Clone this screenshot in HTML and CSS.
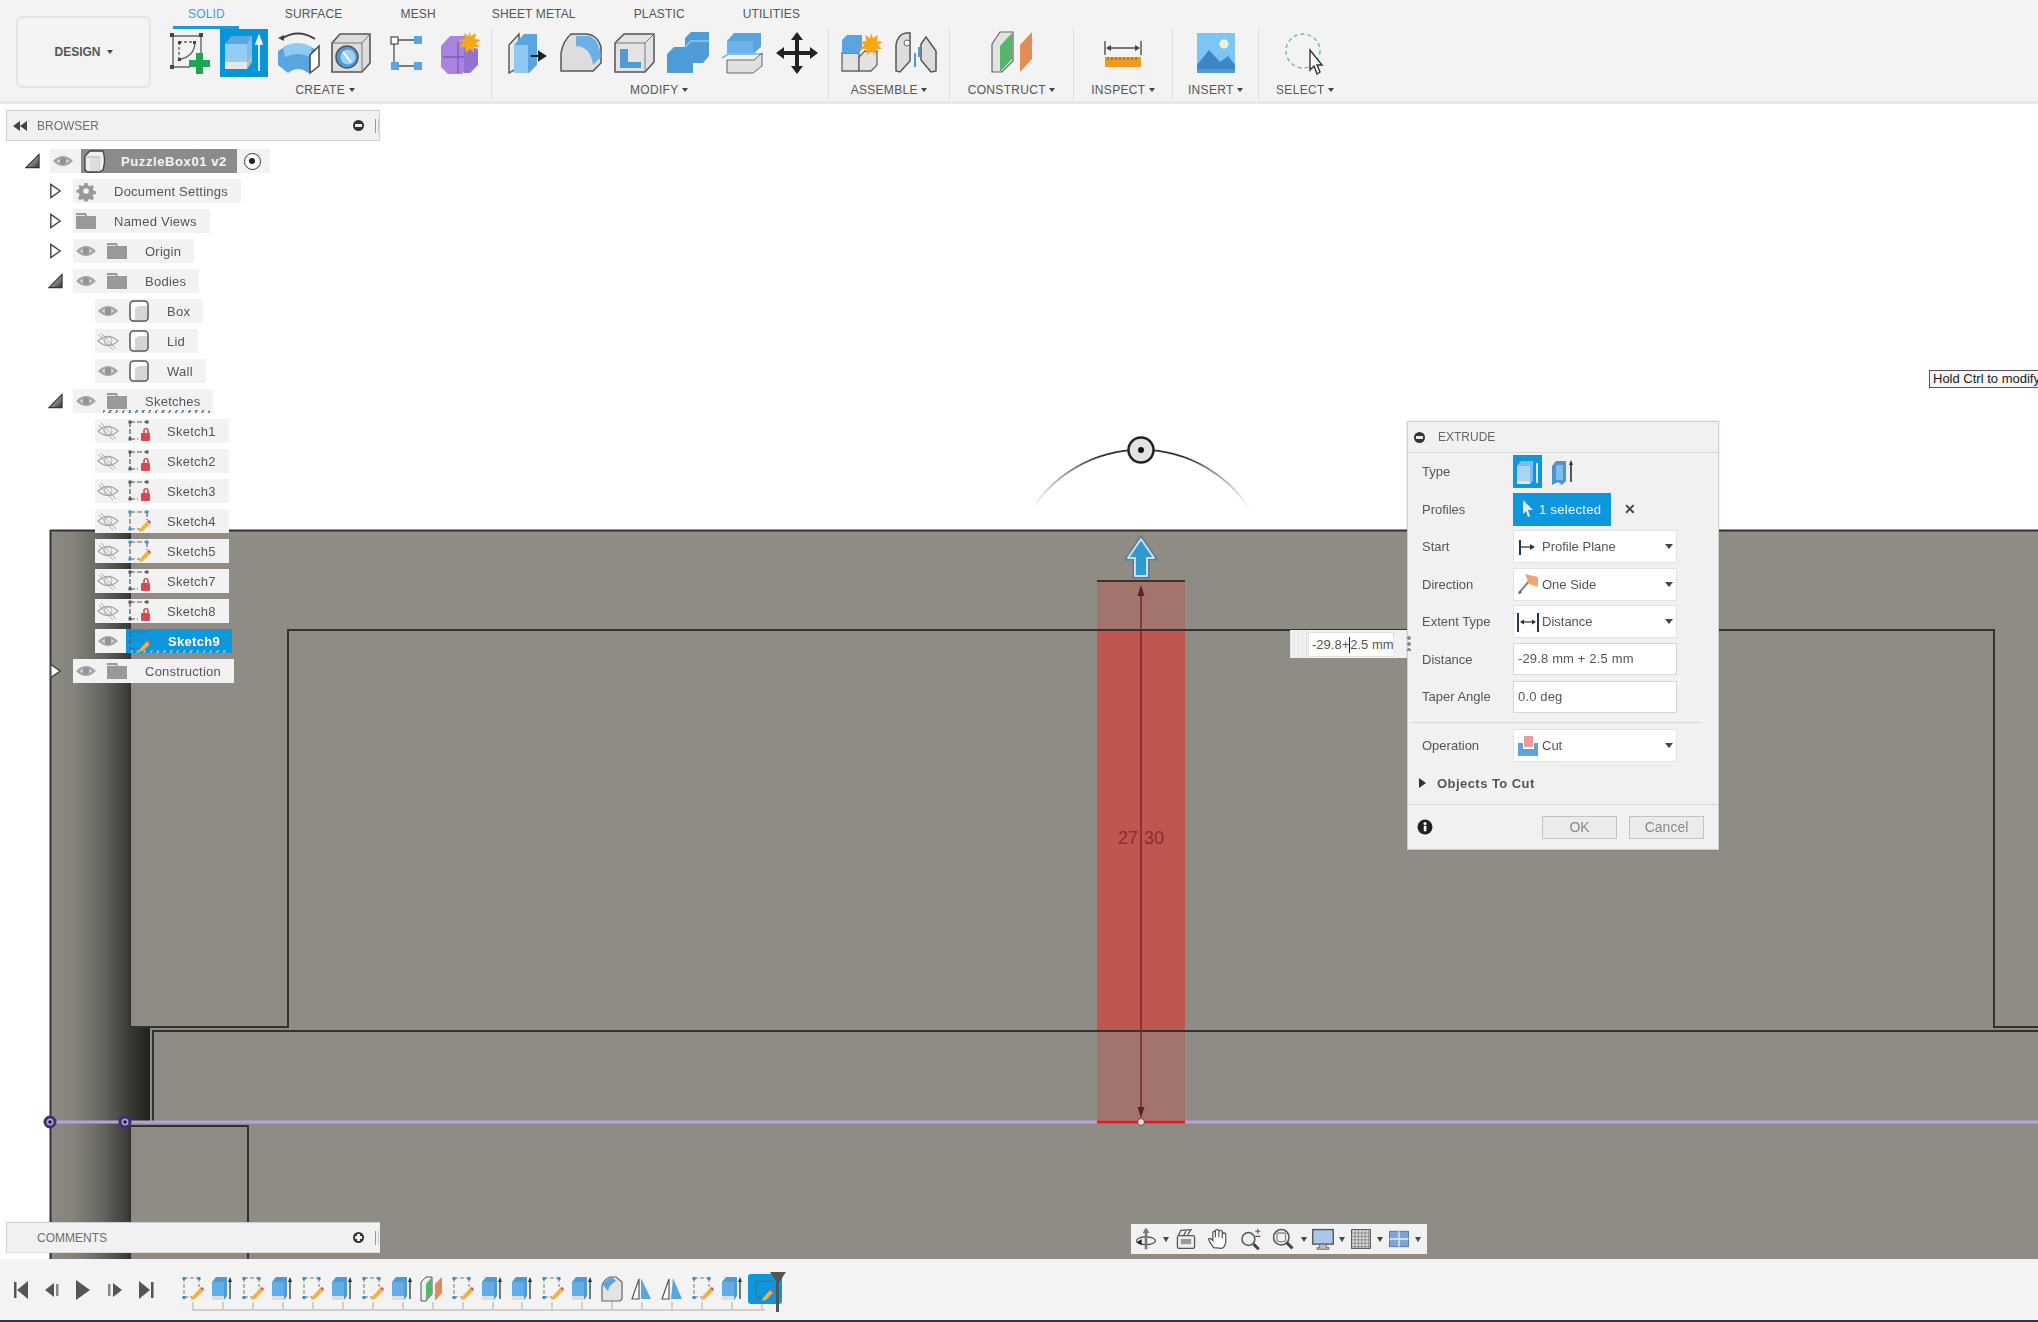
FILE: index.html
```html
<!DOCTYPE html>
<html lang="en">
<head>
<meta charset="utf-8">
<title>PuzzleBox01 v2 - Extrude</title>
<link rel="stylesheet" href="styles.css">
</head>
<body>
<svg class="defs" width="0" height="0" aria-hidden="true">
  <defs>
    <linearGradient id="darkSide" x1="0" x2="1" y1="0" y2="0">
      <stop offset="0" stop-color="#8c8a82"/><stop offset=".3" stop-color="#85837b"/><stop offset=".65" stop-color="#666560"/><stop offset="1" stop-color="#3a3a33"/>
    </linearGradient>
    <linearGradient id="darkStep" x1="0" x2="1" y1="0" y2="0">
      <stop offset="0" stop-color="#3a3a34"/><stop offset="1" stop-color="#1f1f1c"/>
    </linearGradient>
    <linearGradient id="arcFade" x1="0" x2="1" y1="0" y2="0">
      <stop offset="0" stop-color="#333" stop-opacity="0"/><stop offset=".3" stop-color="#333"/><stop offset=".7" stop-color="#333"/><stop offset="1" stop-color="#333" stop-opacity="0"/>
    </linearGradient>
    <linearGradient id="twistFill" x1="0" x2="1" y1="0" y2="1">
      <stop offset="0" stop-color="#eee"/><stop offset="1" stop-color="#333"/>
    </linearGradient>

    <symbol id="new-sketch" viewBox="0 0 48 48">
      <g fill="none" stroke="#666" stroke-width="1.4"><path d="M7 7H35M7 7V38M7 38H24M35 7V24"/><path d="M13 13V31M13 13H29" stroke-dasharray="3 2"/><path d="M15 30Q28 27 29 14"/></g>
      <g fill="#444"><rect x="4" y="4" width="4" height="4"/><rect x="33" y="4" width="4" height="4"/><rect x="4" y="36" width="4" height="4"/><rect x="12" y="12" width="3" height="3"/><rect x="12" y="29" width="3" height="3"/><rect x="27" y="12" width="3" height="3"/></g>
      <path d="M30 24h7v7h7v7h-7v7h-7v-7h-7v-7h7z" fill="#1fa650"/>
    </symbol>
    <symbol id="extrude-active" viewBox="0 0 48 48">
      <path d="M5 37V15L12 7H32V30L27 37Z" fill="#7dbdee"/><path d="M5 15L12 7H32L27 15Z" fill="#5fa6e0"/><path d="M5 15H27V33H5Z" fill="#94cef6"/><path d="M5 33H27V40H5Z" fill="#e6e6e6"/><path d="M27 33L32 26V33L27 40Z" fill="#bbb"/>
      <path d="M39 42V11M36 15L39 7L42 15Z" stroke="#fff" stroke-width="1.6" fill="#fff"/>
    </symbol>
    <symbol id="revolve" viewBox="0 0 48 48">
      <path d="M7 10Q24 -1 41 10" fill="none" stroke="#444" stroke-width="2"/><path d="M4 9l6-3v6z" fill="#444"/>
      <path d="M4 22Q24 8 44 22V36L34 44Q24 36 14 44L4 36Z" fill="#5aa5df"/><path d="M9 18Q24 10 38 18L36 28Q24 22 11 28Z" fill="#8fcaf2"/><path d="M36 26L45 17V37L36 44Z" fill="#fff" stroke="#444" stroke-width="1.5"/>
    </symbol>
    <symbol id="hole" viewBox="0 0 48 48">
      <path d="M4 14L12 5H42V34L34 43H4Z" fill="#ddd" stroke="#555" stroke-width="1.6"/><path d="M34 14H4M34 14L42 5M34 14V43" fill="none" stroke="#777"/><circle cx="19" cy="28" r="11" fill="#4e9bd6" stroke="#555" stroke-width="1.5"/><circle cx="20" cy="28" r="7.5" fill="#9ed0f2"/><path d="M15 23L23 33" stroke="#fff" stroke-width="2"/>
    </symbol>
    <symbol id="pattern" viewBox="0 0 48 48">
      <rect x="9" y="8" width="7" height="7" fill="#fff" stroke="#555" stroke-width="1.3"/><rect x="32" y="7" width="8" height="8" fill="#5aa5df"/><rect x="9" y="33" width="8" height="8" fill="#5aa5df"/><rect x="32" y="33" width="8" height="8" fill="#5aa5df"/>
      <path d="M16 11H32M12 15V33M17 37H32" stroke="#555" stroke-width="1.3"/>
    </symbol>
    <symbol id="form" viewBox="0 0 48 48">
      <path d="M5 17L14 7H32V38L26 45H12L5 38Z" fill="#a884e0"/><path d="M7 28H40M22 13V44" stroke="#7d59bd" stroke-width="1.3"/><path d="M32 17L42 20V36L34 44H28V18Z" fill="#9470d3"/>
      <path d="M33 2l2 5 5-3-1 6 6 1-5 3 4 4-6 0 0 6-4-4-4 4-1-6-6 0 4-4-4-3 6-1-1-6 5 3z" fill="#f5a81c"/>
    </symbol>
    <symbol id="press" viewBox="0 0 48 48">
      <path d="M6 16L16 5V38L6 44Z" fill="#e9e9e9" stroke="#555" stroke-width="1.4"/><path d="M11 16L21 5H34V36L26 44H11Z" fill="#5aa5df"/><path d="M11 16H25V44H11Z" fill="#8dc9f3"/>
      <path d="M28 27H40M36 23L42 27L36 31Z" stroke="#222" stroke-width="2" fill="#222"/>
    </symbol>
    <symbol id="fillet" viewBox="0 0 48 48">
      <path d="M4 24Q6 12 14 5H28Q40 5 44 18V34L36 42H4Z" fill="#ddd" stroke="#555" stroke-width="1.5"/><path d="M19 7H32Q42 10 44 28L36 36Q34 18 19 17Z" fill="#6bb0e6"/>
    </symbol>
    <symbol id="shell" viewBox="0 0 48 48">
      <path d="M4 14L13 5H43V33L34 43H4Z" fill="#e3e3e3" stroke="#555" stroke-width="1.5"/><path d="M34 14H4M34 14L43 5M34 14V43" fill="none" stroke="#777"/><path d="M9 20H17V33H30V39H9Z" fill="#4e9bd6"/>
    </symbol>
    <symbol id="combine" viewBox="0 0 48 48">
      <path d="M2 25L9 18H20V9L26 3H44V27L38 34H28V44H2Z" fill="#4e9bd6"/><path d="M20 18L26 12H44" fill="none" stroke="#7dbdee" stroke-width="2"/>
    </symbol>
    <symbol id="split" viewBox="0 0 48 48">
      <path d="M8 12L15 4H42V18L34 25H8Z" fill="#5aa5df"/><path d="M8 12H34V25H8Z" fill="#6bb3ea"/><path d="M3 29L10 25H44" fill="none" stroke="#82bfe9" stroke-width="2"/><path d="M8 31H35L43 24V37L34 44H8Z" fill="#e0e0e0" stroke="#666" stroke-width="1"/>
    </symbol>
    <symbol id="move" viewBox="0 0 48 48">
      <path d="M24 3L30 11H26V22H37V18L45 24L37 30V26H26V37H30L24 45L18 37H22V26H11V30L3 24L11 18V22H22V11H18Z" fill="#222"/>
    </symbol>
    <symbol id="new-comp" viewBox="0 0 48 48">
      <path d="M4 42V24H21V42Z" fill="#e2e2e2" stroke="#666" stroke-width="1.3"/><path d="M21 42V28L27 22H39V36L33 42Z" fill="#e2e2e2" stroke="#666" stroke-width="1.3"/><path d="M4 24V11L9 6H24V20L21 24Z" fill="#5aa5df"/>
      <path d="M33 4l2 5 5-3-1 6 6 1-5 3 4 4-6 0-1 6-4-4-4 4-1-6-6 0 4-4-4-3 6-1-1-6 5 3z" fill="#f5a81c"/>
    </symbol>
    <symbol id="joint" viewBox="0 0 48 48">
      <path d="M4 42V16Q6 5 14 4H18V32L8 43Z" fill="#ddd" stroke="#555" stroke-width="1.5"/><path d="M44 42V22L34 8L29 15V31L39 43Z" fill="#ddd" stroke="#555" stroke-width="1.5"/><path d="M23 24V38M27 18V28" stroke="#4e9bd6" stroke-width="2"/><circle cx="15" cy="14" r="3" fill="#fff" stroke="#666"/>
    </symbol>
    <symbol id="plane" viewBox="0 0 48 48">
      <path d="M4 15L12 3H25V32L14 43H4Z" fill="#e3e3e3" stroke="#666" stroke-width="1.2"/><path d="M12 43L12 17L24 4V30Z" fill="#55b56b"/><path d="M32 16L44 3V30L32 43Z" fill="#e28d55"/>
    </symbol>
    <symbol id="measure" viewBox="0 0 48 48">
      <path d="M6 12V26M42 12V26" stroke="#444" stroke-width="1.3"/><path d="M8 19H40" stroke="#444" stroke-width="1.4"/><path d="M7 19l5-3v6zM41 19l-5-3v6z" fill="#444"/>
      <rect x="6" y="28" width="36" height="10" fill="#ef9a22"/><path d="M9 28v3M13 28v3M17 28v3M21 28v3M25 28v3M29 28v3M33 28v3M37 28v3" stroke="#8c5510" stroke-width="1"/>
    </symbol>
    <symbol id="image" viewBox="0 0 48 48">
      <rect x="5" y="4" width="38" height="40" fill="#7cc6f5"/><circle cx="32" cy="15" r="4.5" fill="#f3f3d0"/><path d="M5 36L17 21L28 33L36 27L43 36V44H5Z" fill="#3d85c4"/><rect x="5" y="40" width="38" height="4" fill="#4e9bd6"/>
    </symbol>
    <symbol id="select" viewBox="0 0 48 48">
      <circle cx="22" cy="22" r="17" fill="none" stroke="#6cc08a" stroke-width="1.4" stroke-dasharray="4 3"/>
      <path d="M29 21V41L33 37L36 45L39 43L36 36H41Z" fill="#fff" stroke="#333" stroke-width="1.4"/>
    </symbol>

    <symbol id="eye" viewBox="0 0 26 24">
      <path d="M3 12Q13 2 23 12Q13 22 3 12Z" fill="#a5a5a5"/><path d="M7 12Q13 6.500 19 12Q13 17.500 7 12Z" fill="#e8e8e8"/><circle cx="13" cy="12" r="3.400" fill="#939393"/>
    </symbol>
    <symbol id="eye-off" viewBox="0 0 26 24">
      <path d="M3 12Q13 3 23 12Q13 21 3 12Z" fill="none" stroke="#aaa" stroke-width="1.300"/><circle cx="13" cy="12" r="4" fill="none" stroke="#bbb"/><path d="M6 4L21 20M4 6L18 21" stroke="#aaa" stroke-width="1"/>
    </symbol>
    <symbol id="folder" viewBox="0 0 26 24">
      <path d="M3 4H13L14 7H23V20H3Z" fill="#999"/><path d="M3 6H12V7H3Z" fill="#e5e5e5"/>
    </symbol>
    <symbol id="gear" viewBox="-3 -3 32 30">
      <path d="M11 2h4l.6 3 2.400 1 2.600-1.600 2.400 2.600-1.600 2.400 1 2.400 3 .6v3.200l-3 .6-1 2.400 1.600 2.600-2.400 2.400-2.600-1.600-2.400 1-.6 2.200h-4l-.6-2.200-2.400-1-2.600 1.600-2.400-2.400L5 17l-1-2.400-3-.6v-3.200l3-.6 1-2.400-1.600-2.400L5.800 4.400 8.400 6l2-1z" fill="#999"/><circle cx="13" cy="12" r="3.500" fill="#f2f2f2"/>
    </symbol>
    <symbol id="body" viewBox="0 0 26 24">
      <rect x="4" y="2" width="18" height="20" rx="3.500" fill="#fff" stroke="#555" stroke-width="1.500"/><path d="M9 9L13 7H21V20L18 21H9Z" fill="#d5d5d5"/>
    </symbol>
    <symbol id="root-body" viewBox="0 0 26 24">
      <path d="M3 7L8 2H21Q24 10 21 21L17 23H6Q3 22 3 20Z" fill="#efefef" stroke="#444" stroke-width="1.300"/><path d="M3 8H17V23" fill="none" stroke="#aaa"/><path d="M8 9H17V22H8Z" fill="#ddd"/>
    </symbol>
    <symbol id="sketch-lock" viewBox="0 0 26 24">
      <path d="M4 3H21M4 3V20M4 20H12" fill="none" stroke="#555" stroke-width="1.200" stroke-dasharray="5 2"/><g fill="#555"><rect x="2.500" y="1.500" width="3" height="3"/><rect x="19.500" y="1.500" width="3" height="3"/><rect x="2.500" y="18.500" width="3" height="3"/></g>
      <path d="M18 14V11Q20 8 22 11V14" fill="none" stroke="#d74852" stroke-width="1.600"/><rect x="15" y="14" width="9" height="8" rx="1" fill="#d74852"/>
    </symbol>
    <symbol id="sketch-edit" viewBox="0 0 26 24">
      <path d="M4 3H21M4 3V20M4 20H14M21 3V11" fill="none" stroke="#666" stroke-width="1.200" stroke-dasharray="5 2"/><g fill="#3a8fd0"><rect x="2.500" y="1.500" width="3" height="3"/><rect x="19.500" y="1.500" width="3" height="3"/><rect x="2.500" y="18.500" width="3" height="3"/></g>
      <path d="M14 20L21 12L24 15L17 22L13 23Z" fill="#f1b13c"/><path d="M21 12L24 15L25 13L23 11Z" fill="#e2504f"/>
    </symbol>
    <symbol id="sketch-sel" viewBox="0 0 26 24">
      <path d="M4 3H21M4 3V20M4 20H12" fill="none" stroke="#2a6f9a" stroke-width="1.200" stroke-dasharray="5 2"/>
      <path d="M14 20L21 12L24 15L17 22L13 23Z" fill="#f1b13c"/><path d="M21 12L24 15L25 13L23 11Z" fill="#e2504f"/>
    </symbol>
    <symbol id="tw-open" viewBox="0 0 16 16"><path d="M1 15L15 1V15Z" fill="url(#twistFill)" stroke="#333" stroke-width="1.200"/></symbol>
    <symbol id="tw-closed" viewBox="0 0 16 16"><path d="M3 1L13 8L3 15Z" fill="#fff" stroke="#444" stroke-width="1.500"/></symbol>

    <symbol id="d-solid" viewBox="0 0 28 32">
      <path d="M3 10L7 5H19V25L16 28H3Z" fill="#7dbdee"/><path d="M3 10H16V25H3Z" fill="#a5d5f7"/><path d="M3 25H16V28H3Z" fill="#e5e5e5"/><path d="M23 7V27" stroke="#fff" stroke-width="1.600"/>
    </symbol>
    <symbol id="d-thin" viewBox="0 0 28 32">
      <path d="M4 10L8 5H18V25L14 29L10 26L4 29Z" fill="#4e93cf"/><path d="M8 9H15V24H8Z" fill="#7dbdee"/><path d="M23 6V26" stroke="#333" stroke-width="1.600"/><path d="M21 9L23 4L25 9Z" fill="#333"/>
    </symbol>
    <symbol id="d-cursor" viewBox="0 0 16 20"><path d="M3 1V15L6 12L8 18L10 17L8 11H13Z" fill="#e8e8e8"/></symbol>
    <symbol id="d-start" viewBox="0 0 24 24"><path d="M4 5V20" stroke="#1d3a5c" stroke-width="2"/><path d="M5 12H15" stroke="#333" stroke-width="1.300"/><path d="M19 12L14 9V15Z" fill="#333"/></symbol>
    <symbol id="d-oneside" viewBox="0 0 24 24"><path d="M3 21L14 8" stroke="#888" stroke-width="2"/><path d="M9 2L22 5V15L13 12Z" fill="#efa56f"/><path d="M2 22l4-1-2-3z" fill="#3a6fa5"/></symbol>
    <symbol id="d-dist" viewBox="0 0 24 24"><path d="M2 3V22M22 3V22" stroke="#1d3a5c" stroke-width="2"/><path d="M5 12H19" stroke="#333" stroke-width="1.200"/><path d="M4 12L8 9.500V14.500ZM20 12L16 9.500V14.500Z" fill="#333"/></symbol>
    <symbol id="d-cut" viewBox="0 0 24 24"><path d="M8 2H17V13H8Z" fill="#ea9c9c"/><path d="M2 9H7V15H18V9H22V22H2Z" fill="#5aa5df"/></symbol>
    <symbol id="info" viewBox="0 0 16 16"><circle cx="8" cy="8" r="7.500" fill="#222"/><rect x="6.800" y="6.800" width="2.600" height="5.500" fill="#fff"/><circle cx="8" cy="4.500" r="1.500" fill="#fff"/></symbol>

    <symbol id="n-orbit" viewBox="0 0 28 28"><ellipse cx="14" cy="16" rx="11" ry="4.500" fill="none" stroke="#444" stroke-width="1.400"/><path d="M14 2V26" stroke="#777" stroke-width="3"/><path d="M14 1L10 7H18Z" fill="#777"/><path d="M3 18l6-4v7z" fill="#222"/></symbol>
    <symbol id="n-look" viewBox="0 0 28 28"><rect x="4" y="10" width="20" height="15" rx="2" fill="#eee" stroke="#555" stroke-width="1.500"/><rect x="8" y="14" width="12" height="6" fill="#999"/><path d="M5 10L8 4L21 3M11 10l3-5M16 9l3-5" fill="none" stroke="#555" stroke-width="1.500"/></symbol>
    <symbol id="n-pan" viewBox="0 0 28 28"><path d="M9 24Q3 16 3 14Q5 12 8 16V6Q10 4 11 6V12V4Q13 2 15 4V12V5Q17 3 19 5V13V8Q21 6 23 8V18Q22 24 18 25Z" fill="#fff" stroke="#555" stroke-width="1.400"/></symbol>
    <symbol id="n-zoom" viewBox="0 0 28 28"><circle cx="11" cy="14" r="7.500" fill="#e6f1f3" stroke="#555" stroke-width="1.800"/><path d="M17 20L23 26" stroke="#444" stroke-width="3.500"/><path d="M22 2V8M19 5H25M19 11H25" stroke="#555" stroke-width="1.300"/></symbol>
    <symbol id="n-fit" viewBox="0 0 28 28"><circle cx="12" cy="12" r="9" fill="#eef4f5" stroke="#555" stroke-width="1.800"/><rect x="7" y="7" width="10" height="10" rx="2" fill="none" stroke="#888" stroke-width="1.500"/><path d="M18 18L25 25" stroke="#444" stroke-width="3.500"/></symbol>
    <symbol id="n-display" viewBox="0 0 28 28"><rect x="2" y="3" width="24" height="17" fill="#a9c7e6" stroke="#555" stroke-width="1.600"/><path d="M10 20H18V24H21V26H7V24H10Z" fill="#bbb" stroke="#666"/></symbol>
    <symbol id="n-grid" viewBox="0 0 28 28"><rect x="3" y="3" width="22" height="22" fill="#d7d7d7" stroke="#555" stroke-width="1.200"/><path d="M7 3V25M11 3V25M15 3V25M19 3V25M23 3V25M3 7H25M3 11H25M3 15H25M3 19H25M3 23H25" stroke="#777" stroke-width=".8"/></symbol>
    <symbol id="n-views" viewBox="0 0 28 28"><rect x="3" y="5" width="22" height="18" fill="#7da5d1" stroke="#4a6f9a"/><path d="M14 5V23M3 14H25" stroke="#e8eef5" stroke-width="1.500"/></symbol>

    <symbol id="t-first" viewBox="0 0 20 24"><rect x="3" y="4" width="2.500" height="16" fill="#555"/><path d="M17 3V21L6 12Z" fill="#555"/></symbol>
    <symbol id="t-prev" viewBox="0 0 20 24"><path d="M12 5V19L3 12Z" fill="#555"/><rect x="14" y="6" width="2.500" height="12" fill="#888"/></symbol>
    <symbol id="t-play" viewBox="0 0 20 24"><path d="M3 2V22L17 12Z" fill="#555"/></symbol>
    <symbol id="t-next" viewBox="0 0 20 24"><rect x="3" y="6" width="2.500" height="12" fill="#888"/><path d="M8 5V19L17 12Z" fill="#555"/></symbol>
    <symbol id="t-last" viewBox="0 0 20 24"><path d="M3 3V21L14 12Z" fill="#555"/><rect x="15" y="4" width="2.500" height="16" fill="#555"/></symbol>

    <symbol id="h-sketch" viewBox="0 0 24 28">
      <path d="M4 4H19M4 4V23M4 23H12M19 4V13" fill="none" stroke="#777" stroke-width="1" stroke-dasharray="4 2"/><g fill="#2f8ed2"><rect x="2.500" y="3" width="3" height="3"/><rect x="17.500" y="3" width="3" height="3"/><rect x="2.500" y="22" width="3" height="3"/></g>
      <path d="M12 23L20 14L23 17L15 25L11 26Z" fill="#f1b13c"/><path d="M20 14L23 17L24 15L22 13Z" fill="#e2504f"/>
    </symbol>
    <symbol id="h-extrude" viewBox="0 0 24 28">
      <path d="M2 8L6 3H17V22L14 26H2Z" fill="#4e9bd6"/><path d="M2 8H14V22H2Z" fill="#63ade6"/><path d="M2 22H14V26H2Z" fill="#ddd"/><path d="M20 6V25" stroke="#333" stroke-width="1.300"/><path d="M18 8L20 3L22 8Z" fill="#333"/>
    </symbol>
    <symbol id="h-plane" viewBox="0 0 24 28"><path d="M1 8L6 3H12V20L6 27H1Z" fill="#eee" stroke="#555"/><path d="M6 27V10L12 3V19Z" fill="#55b56b"/><path d="M15 10L22 3V19L15 27Z" fill="#e28d55"/></symbol>
    <symbol id="h-fillet" viewBox="0 0 24 28"><path d="M2 12Q3 6 10 3H16L22 8V25L20 27H2Z" fill="#e3e3e3" stroke="#666" stroke-width="1.200"/><path d="M3 11Q5 6 12 3L16 7Q9 11 8 17Z" fill="#5aa5df"/></symbol>
    <symbol id="h-tri-a" viewBox="0 0 24 28"><path d="M9 5L2 25H9Z" fill="#fff" stroke="#555" stroke-width="1.200"/><path d="M11 4L21 25H11Z" fill="#5aa5df"/></symbol>
    <symbol id="h-tri-b" viewBox="0 0 24 28"><path d="M9 5L2 25H9Z" fill="#fff" stroke="#555" stroke-width="1.200"/><path d="M13 4L22 25H11Z" fill="#5aa5df"/></symbol>
    <symbol id="h-active" viewBox="0 0 34 30">
      <path d="M8 7H24M8 7V24M8 24H15" fill="none" stroke="#4a6a80" stroke-width="1"/><path d="M15 24L22 16L25 19L18 26L14 27Z" fill="#f1b13c"/><path d="M22 16L25 19L26 17L24 15Z" fill="#e2504f"/>
    </symbol>
  </defs>
</svg>

<div class="app">
  <header class="ribbon">
    <button class="design">DESIGN <i class="caret"></i></button>
    <div class="ribbon-main">
      <nav class="tabs">
        <span class="tab tab-on">SOLID</span>
        <span class="tab tab-surface">SURFACE</span>
        <span class="tab">MESH</span>
        <span class="tab tab-sheet">SHEET METAL</span>
        <span class="tab">PLASTIC</span>
        <span class="tab">UTILITIES</span>
      </nav>
      <div class="groups">
        <section class="group g-create">
          <div class="tools">
            <span class="tool"><svg class="tool-ico"><use href="#new-sketch"/></svg></span>
            <span class="tool tool-on"><svg class="tool-ico"><use href="#extrude-active"/></svg></span>
            <span class="tool"><svg class="tool-ico"><use href="#revolve"/></svg></span>
            <span class="tool"><svg class="tool-ico"><use href="#hole"/></svg></span>
            <span class="tool"><svg class="tool-ico"><use href="#pattern"/></svg></span>
            <span class="tool"><svg class="tool-ico"><use href="#form"/></svg></span>
          </div>
          <div class="group-label">CREATE <i class="caret"></i></div>
        </section>
        <section class="group g-modify">
          <div class="tools">
            <span class="tool"><svg class="tool-ico"><use href="#press"/></svg></span>
            <span class="tool"><svg class="tool-ico"><use href="#fillet"/></svg></span>
            <span class="tool"><svg class="tool-ico"><use href="#shell"/></svg></span>
            <span class="tool"><svg class="tool-ico"><use href="#combine"/></svg></span>
            <span class="tool"><svg class="tool-ico"><use href="#split"/></svg></span>
            <span class="tool"><svg class="tool-ico"><use href="#move"/></svg></span>
          </div>
          <div class="group-label label-modify">MODIFY <i class="caret"></i></div>
        </section>
        <section class="group g-assemble">
          <div class="tools">
            <span class="tool"><svg class="tool-ico"><use href="#new-comp"/></svg></span>
            <span class="tool"><svg class="tool-ico"><use href="#joint"/></svg></span>
          </div>
          <div class="group-label">ASSEMBLE <i class="caret"></i></div>
        </section>
        <section class="group g-construct">
          <div class="tools"><span class="tool"><svg class="tool-ico"><use href="#plane"/></svg></span></div>
          <div class="group-label">CONSTRUCT <i class="caret"></i></div>
        </section>
        <section class="group g-inspect">
          <div class="tools"><span class="tool"><svg class="tool-ico"><use href="#measure"/></svg></span></div>
          <div class="group-label">INSPECT <i class="caret"></i></div>
        </section>
        <section class="group g-insert">
          <div class="tools"><span class="tool"><svg class="tool-ico"><use href="#image"/></svg></span></div>
          <div class="group-label">INSERT <i class="caret"></i></div>
        </section>
        <section class="group g-select">
          <div class="tools"><span class="tool"><svg class="tool-ico"><use href="#select"/></svg></span></div>
          <div class="group-label">SELECT <i class="caret"></i></div>
        </section>
      </div>
    </div>
  </header>

  <main class="viewport">
    <svg class="scene" viewBox="0 104 2038 1155" preserveAspectRatio="none">
      <rect class="m-face" x="50" y="530" width="1988" height="729"/>
      <rect x="50" y="530" width="80" height="729" fill="url(#darkSide)"/>
      <rect x="130" y="1027" width="20" height="95" fill="url(#darkStep)"/>
      <rect class="m-cut" x="1097" y="581" width="88" height="541"/>
      <rect class="m-red" x="1097" y="630" width="88" height="401"/>
      <g class="m-line">
        <path d="M50 530.500H2038M50.500 530V1259"/>
        <path d="M130 1027H288V630H1994V1027H2038"/>
        <path d="M153 1122V1031H2038"/>
        <path d="M130 1126H248V1259M130 1122V1259M130 1126V1122"/>
        <path d="M130 531V1027"/>
      </g>
      <path class="m-top" d="M1097 581H1185"/>
      <path class="m-dim" d="M1141 590V1108"/>
      <path class="m-head" d="M1141 585L1137.500 596H1144.500ZM1141 1118L1137.500 1107H1144.500Z"/>
      <text class="m-num" x="1138" y="844" text-anchor="end">27</text>
      <text class="m-num" x="1144" y="844">30</text>
      <path class="m-purple" d="M50 1122H2038"/>
      <path class="m-redline" d="M1097 1122H1185"/>
      <g class="m-node"><circle cx="50" cy="1122" r="5"/><circle cx="125" cy="1122" r="5"/></g>
      <circle class="m-dot" cx="50" cy="1122" r="1.800"/>
      <circle class="m-dot" cx="125" cy="1122" r="1.800"/>
      <circle class="m-pt" cx="1141" cy="1122" r="3.500"/>
      <path class="m-arc" d="M1032 509A130 130 0 0 1 1250 509"/>
      <circle class="m-handle" cx="1141" cy="450" r="12.500"/>
      <circle class="m-dot-k" cx="1141" cy="450" r="3"/>
      <path class="m-arrow-o" d="M1141 537L1126 559H1134V577H1148V559H1156Z"/>
      <path class="m-arrow" d="M1141 539L1128 558H1135V576H1147V558H1154Z"/>
    </svg>

    <div class="panel panel-browser">
      <svg class="rew" viewBox="0 0 14 10"><path d="M7 0V10L0 5ZM14 0V10L7 5Z"/></svg>
      <span class="panel-title">BROWSER</span>
      <i class="round round-minus"></i>
      <i class="pin"></i>
    </div>

    <div class="tree">
      <div class="node n0">
        <svg class="twist"><use href="#tw-open"/></svg>
        <div class="row row-root">
          <svg class="slot"><use href="#eye"/></svg>
          <span class="root-sel"><svg class="slot"><use href="#root-body"/></svg><b class="root-name">PuzzleBox01 v2</b></span>
          <span class="target"><i></i></span>
        </div>
      </div>
      <div class="node n1">
        <svg class="twist"><use href="#tw-closed"/></svg>
        <div class="row"><svg class="slot"><use href="#gear"/></svg><span class="label">Document Settings</span></div>
      </div>
      <div class="node n1">
        <svg class="twist"><use href="#tw-closed"/></svg>
        <div class="row"><svg class="slot"><use href="#folder"/></svg><span class="label">Named Views</span></div>
      </div>
      <div class="node n1">
        <svg class="twist"><use href="#tw-closed"/></svg>
        <div class="row"><svg class="slot"><use href="#eye"/></svg><svg class="slot"><use href="#folder"/></svg><span class="label">Origin</span></div>
      </div>
      <div class="node n1">
        <svg class="twist"><use href="#tw-open"/></svg>
        <div class="row"><svg class="slot"><use href="#eye"/></svg><svg class="slot"><use href="#folder"/></svg><span class="label">Bodies</span></div>
      </div>
      <div class="node n2"><div class="row"><svg class="slot"><use href="#eye"/></svg><svg class="slot"><use href="#body"/></svg><span class="label">Box</span></div></div>
      <div class="node n2"><div class="row"><svg class="slot"><use href="#eye-off"/></svg><svg class="slot"><use href="#body"/></svg><span class="label">Lid</span></div></div>
      <div class="node n2"><div class="row"><svg class="slot"><use href="#eye"/></svg><svg class="slot"><use href="#body"/></svg><span class="label">Wall</span></div></div>
      <div class="node n1">
        <svg class="twist"><use href="#tw-open"/></svg>
        <div class="row"><svg class="slot"><use href="#eye"/></svg><svg class="slot"><use href="#folder"/></svg><span class="label">Sketches</span><i class="wavy wavy-sketches"></i></div>
      </div>
      <div class="node n2"><div class="row"><svg class="slot"><use href="#eye-off"/></svg><svg class="slot"><use href="#sketch-lock"/></svg><span class="label">Sketch1</span></div></div>
      <div class="node n2"><div class="row"><svg class="slot"><use href="#eye-off"/></svg><svg class="slot"><use href="#sketch-lock"/></svg><span class="label">Sketch2</span></div></div>
      <div class="node n2"><div class="row"><svg class="slot"><use href="#eye-off"/></svg><svg class="slot"><use href="#sketch-lock"/></svg><span class="label">Sketch3</span></div></div>
      <div class="node n2"><div class="row"><svg class="slot"><use href="#eye-off"/></svg><svg class="slot"><use href="#sketch-edit"/></svg><span class="label">Sketch4</span></div></div>
      <div class="node n2"><div class="row"><svg class="slot"><use href="#eye-off"/></svg><svg class="slot"><use href="#sketch-edit"/></svg><span class="label">Sketch5</span></div></div>
      <div class="node n2"><div class="row"><svg class="slot"><use href="#eye-off"/></svg><svg class="slot"><use href="#sketch-lock"/></svg><span class="label">Sketch7</span></div></div>
      <div class="node n2"><div class="row"><svg class="slot"><use href="#eye-off"/></svg><svg class="slot"><use href="#sketch-lock"/></svg><span class="label">Sketch8</span></div></div>
      <div class="node n2">
        <div class="row row-active">
          <svg class="slot"><use href="#eye"/></svg>
          <span class="active-sel"><svg class="slot"><use href="#sketch-sel"/></svg><b class="active-name">Sketch9</b><i class="wavy wavy-active"></i></span>
        </div>
      </div>
      <div class="node n1">
        <svg class="twist"><use href="#tw-closed"/></svg>
        <div class="row"><svg class="slot"><use href="#eye"/></svg><svg class="slot"><use href="#folder"/></svg><span class="label">Construction</span></div>
      </div>
    </div>

    <div class="panel panel-comments">
      <span class="panel-title">COMMENTS</span>
      <i class="round round-plus"></i>
      <i class="pin"></i>
    </div>

    <div class="hint">Hold Ctrl to modify</div>

    <div class="float-input">
      <i class="grip"></i>
      <span class="float-field">-29.8+<i class="text-cursor"></i>2.5 mm</span>
    </div>

    <aside class="dialog">
      <div class="dlg-head"><i class="round round-minus"></i><span class="dlg-title">EXTRUDE</span></div>
      <div class="dlg-row">
        <span class="dlg-label">Type</span>
        <span class="type-btn type-on"><svg class="type-ico"><use href="#d-solid"/></svg></span>
        <span class="type-btn"><svg class="type-ico"><use href="#d-thin"/></svg></span>
      </div>
      <div class="dlg-row">
        <span class="dlg-label">Profiles</span>
        <span class="sel-btn"><svg class="cur-ico"><use href="#d-cursor"/></svg>1 selected</span>
        <span class="clear">✕</span>
      </div>
      <div class="dlg-row"><span class="dlg-label">Start</span><span class="combo"><svg class="combo-ico"><use href="#d-start"/></svg><span class="combo-text">Profile Plane</span><i class="caret caret-combo"></i></span></div>
      <div class="dlg-row"><span class="dlg-label">Direction</span><span class="combo"><svg class="combo-ico"><use href="#d-oneside"/></svg><span class="combo-text">One Side</span><i class="caret caret-combo"></i></span></div>
      <div class="dlg-row"><span class="dlg-label">Extent Type</span><span class="combo"><svg class="combo-ico"><use href="#d-dist"/></svg><span class="combo-text">Distance</span><i class="caret caret-combo"></i></span></div>
      <div class="dlg-row"><span class="dlg-label">Distance</span><span class="field">-29.8 mm + 2.5 mm</span></div>
      <div class="dlg-row"><span class="dlg-label">Taper Angle</span><span class="field">0.0 deg</span></div>
      <hr class="dlg-sep">
      <div class="dlg-row"><span class="dlg-label">Operation</span><span class="combo"><svg class="combo-ico"><use href="#d-cut"/></svg><span class="combo-text">Cut</span><i class="caret caret-combo"></i></span></div>
      <div class="dlg-row dlg-objects"><i class="disclose"></i><b class="objects">Objects To Cut</b></div>
      <div class="dlg-foot">
        <svg class="info"><use href="#info"/></svg>
        <span class="btn">OK</span>
        <span class="btn">Cancel</span>
      </div>
    </aside>
    <i class="dots"></i>

    <div class="navbar">
      <svg class="nav-ico w30"><use href="#n-orbit"/></svg><i class="nav-caret"></i>
      <svg class="nav-ico w30"><use href="#n-look"/></svg>
      <svg class="nav-ico w34"><use href="#n-pan"/></svg>
      <svg class="nav-ico w32"><use href="#n-zoom"/></svg>
      <svg class="nav-ico w32"><use href="#n-fit"/></svg><i class="nav-caret"></i>
      <svg class="nav-ico w28"><use href="#n-display"/></svg><i class="nav-caret"></i>
      <svg class="nav-ico w28"><use href="#n-grid"/></svg><i class="nav-caret"></i>
      <svg class="nav-ico w28"><use href="#n-views"/></svg><i class="nav-caret"></i>
    </div>
  </main>

  <footer class="timeline">
    <div class="transport">
      <svg class="t-btn"><use href="#t-first"/></svg>
      <svg class="t-btn"><use href="#t-prev"/></svg>
      <svg class="t-btn"><use href="#t-play"/></svg>
      <svg class="t-btn"><use href="#t-next"/></svg>
      <svg class="t-btn"><use href="#t-last"/></svg>
    </div>
    <div class="history">
      <svg class="h-item"><use href="#h-sketch"/></svg>
      <svg class="h-item"><use href="#h-extrude"/></svg>
      <svg class="h-item"><use href="#h-sketch"/></svg>
      <svg class="h-item"><use href="#h-extrude"/></svg>
      <svg class="h-item"><use href="#h-sketch"/></svg>
      <svg class="h-item"><use href="#h-extrude"/></svg>
      <svg class="h-item"><use href="#h-sketch"/></svg>
      <svg class="h-item"><use href="#h-extrude"/></svg>
      <svg class="h-item"><use href="#h-plane"/></svg>
      <svg class="h-item"><use href="#h-sketch"/></svg>
      <svg class="h-item"><use href="#h-extrude"/></svg>
      <svg class="h-item"><use href="#h-extrude"/></svg>
      <svg class="h-item"><use href="#h-sketch"/></svg>
      <svg class="h-item"><use href="#h-extrude"/></svg>
      <svg class="h-item"><use href="#h-fillet"/></svg>
      <svg class="h-item"><use href="#h-tri-a"/></svg>
      <svg class="h-item"><use href="#h-tri-b"/></svg>
      <svg class="h-item"><use href="#h-sketch"/></svg>
      <svg class="h-item"><use href="#h-extrude"/></svg>
      <svg class="h-current"><use href="#h-active"/></svg>
      <i class="marker"></i>
    </div>
  </footer>
  <div class="taskbar"></div>
</div>
</body>
</html>
```

FILE: styles.css
```css
* { box-sizing: border-box; }
html, body { margin: 0; height: 100%; overflow: hidden; }
body { font-family: "Liberation Sans", Arial, sans-serif; font-size: 13px; color: #555; background: #fff; }
.defs { position: absolute; }
i { display: block; font-style: normal; }

.app { width: 2038px; height: 1322px; display: flex; flex-direction: column; filter: blur(.35px); }

/* Ribbon */
.ribbon { height: 104px; flex: none; display: flex; background: #f3f3f3; border-bottom: 3px solid #e7e7e7; }
.design { width: 135px; height: 72px; margin: 16px 14px 0 16px; background: #f3f3f3; border: 2px solid #e3e3e3; border-radius: 6px; font: bold 12px "Liberation Sans", Arial, sans-serif; color: #555; display: flex; align-items: center; justify-content: center; gap: 6px; padding: 0; }
.caret { display: inline-block; width: 0; height: 0; border-left: 3.5px solid transparent; border-right: 3.5px solid transparent; border-top: 4px solid #444; vertical-align: 2px; }
.ribbon-main { display: flex; flex-direction: column; }
.tabs { height: 29px; display: flex; gap: 58px; padding-left: 23px; align-items: center; }
.tab { position: relative; font-size: 12px; letter-spacing: .15px; color: #555; margin-top: -1px; }
.tab-surface { margin-left: 2px; }
.tab-sheet { margin-left: -2px; }
.tab-on { color: #3fa0d0; }
.tab-on::after { content: ""; position: absolute; left: -15px; right: -14px; top: 19px; height: 3px; background: #1e9ad6; }
.groups { display: flex; }
.group { display: flex; flex-direction: column; align-items: center; border-right: 1px solid #dedede; height: 70px; }
.g-create { width: 327px; padding-right: 6px; }
.g-modify { width: 337px; padding-left: 3px; }
.g-assemble { width: 121px; }
.g-construct { width: 124px; }
.g-inspect { width: 99px; }
.g-insert { width: 86px; }
.g-select { width: 92px; border-right: 0; }
.tools { display: flex; height: 48px; }
.tool { width: 54px; height: 48px; display: flex; justify-content: center; }
.tool-ico { width: 48px; height: 48px; }
.tool-on .tool-ico { background: #0696d7; }
.group-label { margin-top: 5px; font-size: 12px; letter-spacing: .3px; line-height: 16px; color: #555; white-space: nowrap; }
.label-modify { margin-right: 5px; }

/* Viewport */
.viewport { flex: none; height: 1155px; position: relative; overflow: hidden; background: #fff; }
.scene { position: absolute; inset: 0; width: 100%; height: 100%; display: block; }
.m-face { fill: #8e8c85; }
.m-cut { fill: #a3736e; }
.m-red { fill: #bf5650; }
.m-line { fill: none; stroke: #33322e; stroke-width: 2; }
.m-top { stroke: #43302c; stroke-width: 2; }
.m-dim { stroke: #7a2523; stroke-width: 1.500; }
.m-head { fill: #5a2422; }
.m-num { font: 18px "Liberation Sans", Arial, sans-serif; fill: #8e2d2a; }
.m-purple { stroke: #b9a0de; stroke-width: 3; }
.m-redline { stroke: #e31b1b; stroke-width: 3; }
.m-node { fill: #b0a0d0; stroke: #3d2f70; stroke-width: 3; }
.m-dot { fill: #1f1850; }
.m-pt { fill: #f3dada; stroke: #6a4040; stroke-width: 1; }
.m-arc { fill: none; stroke: url(#arcFade); stroke-width: 1.800; }
.m-handle { fill: #e3e3e3; stroke: #222; stroke-width: 2.500; }
.m-dot-k { fill: #111; }
.m-arrow-o { fill: #5d7d92; stroke: #5d7d92; stroke-width: 3; stroke-linejoin: round; }
.m-arrow { fill: #2e9bd0; stroke: #cfdde6; stroke-width: 2; stroke-linejoin: round; }

/* Panels */
.panel { position: absolute; left: 6px; width: 374px; height: 31px; background: #f1f1f1; border: 1px solid #cfcfcf; display: flex; align-items: center; }
.panel-browser { top: 6px; }
.panel-comments { top: 1118px; border-right: 0; border-bottom-color: #ddd; }
.rew { width: 14px; height: 10px; margin-left: 6px; fill: #444; }
.panel-title { font-size: 12px; color: #6d6d6d; position: absolute; left: 30px; }
.round { width: 11px; height: 11px; border-radius: 50%; background: #333; position: relative; }
.round::after { content: ""; position: absolute; left: 2px; right: 2px; top: 4px; height: 3px; background: #eee; }
.round-plus::before { content: ""; position: absolute; top: 2px; bottom: 2px; left: 4px; width: 3px; background: #eee; }
.panel .round { position: absolute; left: 346px; top: 9px; }
.pin { position: absolute; left: 368px; top: 8px; width: 4px; height: 14px; border-left: 1px solid #999; border-right: 1px solid #ccc; }

/* Tree */
.tree { position: absolute; left: 0; top: 45px; display: flex; flex-direction: column; gap: 6px; align-items: flex-start; }
.node { display: flex; align-items: center; height: 24px; }
.n0 { padding-left: 25px; }
.n1 { padding-left: 48px; }
.n2 { padding-left: 95px; }
.twist { width: 15px; height: 16px; margin-right: 10px; overflow: visible; }
.row { position: relative; display: flex; align-items: center; gap: 5px; height: 24px; padding-right: 13px; background: #f2f2f2; }
.slot { width: 26px; height: 24px; flex: none; }
.label { margin-left: 10px; letter-spacing: .25px; color: #555; white-space: nowrap; }
.row-root { padding-right: 0; }
.root-sel { display: flex; align-items: center; gap: 5px; height: 24px; background: #8b8b8b; padding-right: 10px; }
.root-sel .slot { margin-left: 1px; }
.root-name { color: #f4f4f4; letter-spacing: .6px; margin-left: 8px; }
.target { width: 17px; height: 17px; border-radius: 50%; border: 1.500px solid #333; background: #fff; display: flex; align-items: center; justify-content: center; margin: 0 9px 0 2px; }
.target i { width: 6px; height: 6px; border-radius: 50%; background: #222; }
.row-active { padding-right: 0; background: #f2f2f2; }
.active-sel { position: relative; display: flex; align-items: center; gap: 5px; height: 24px; background: #0e97dc; padding-right: 12px; }
.active-name { color: #fff; margin-left: 11px; letter-spacing: .3px; }
.wavy { position: absolute; height: 3px; background: repeating-linear-gradient(115deg, #6d8ba0 0 2px, transparent 2px 6px); }
.wavy-sketches { left: 30px; right: 3px; bottom: 0; }
.wavy-active { left: 5px; right: 3px; bottom: 0; background: repeating-linear-gradient(115deg, #7fb8d8 0 2px, transparent 2px 6px); }

.hint { position: absolute; left: 1929px; top: 266px; width: 120px; height: 18px; padding-left: 3px; background: #f3f5f6; border: 1px solid #555; font-size: 13px; line-height: 16px; color: #222; white-space: nowrap; }

/* Floating input */
.float-input { position: absolute; left: 1290px; top: 526px; width: 117px; height: 28px; background: #f1f1f1; display: flex; align-items: center; }
.grip { width: 18px; height: 28px; background: repeating-linear-gradient(90deg, #e2e2e2 0 1px, transparent 1px 4px); }
.float-field { width: 86px; height: 25px; background: #fff; border: 1px solid #e2e2e2; padding-left: 3px; line-height: 23px; font-size: 13px; color: #555; display: flex; white-space: nowrap; overflow: hidden; }
.text-cursor { width: 1px; height: 16px; margin: 4px 0 0; background: #223; flex: none; }
.dots { position: absolute; left: 1407px; top: 531px; width: 4px; height: 16px; background: radial-gradient(circle, #8a8a8a 0 1.800px, transparent 2px) 0 0 / 4px 6px repeat-y; }

/* Dialog */
.dialog { position: absolute; left: 1407px; top: 317px; width: 312px; height: 429px; background: #f1f1f1; border: 1px solid #cfcfcf; box-shadow: 0 0 2px rgba(0,0,0,.15); }
.dlg-head { height: 31px; display: flex; align-items: center; padding-left: 6px; border-bottom: 1px solid #d8d8d8; }
.dlg-title { margin-left: 13px; font-size: 12px; color: #666; }
.dlg-row { height: 37.500px; display: flex; align-items: center; padding-left: 14px; }
.dlg-label { width: 91px; flex: none; color: #555; font-size: 13px; }
.type-btn { width: 29px; height: 33px; display: flex; align-items: center; justify-content: center; }
.type-on { background: #0e97dc; margin-right: 5px; }
.type-ico { width: 28px; height: 32px; }
.sel-btn { width: 98px; height: 33px; background: #0e97dc; color: #eef7fc; display: flex; align-items: center; padding-left: 7px; font-size: 13px; letter-spacing: .3px; }
.cur-ico { width: 16px; height: 20px; margin-right: 3px; }
.clear { margin-left: 13px; font-size: 14px; font-weight: bold; color: #444; }
.combo { position: relative; width: 164px; height: 33px; background: #fff; border: 1px solid #e3e3e3; display: flex; align-items: center; }
.combo-ico { width: 24px; height: 24px; margin-left: 2px; flex: none; }
.combo-text { margin-left: 2px; color: #555; }
.caret-combo { position: absolute; right: 3px; top: 13px; border-left-width: 4px; border-right-width: 4px; border-top-width: 5px; }
.field { width: 164px; height: 32px; background: #fff; border: 1px solid #d6d6d6; padding-left: 4px; line-height: 30px; color: #555; letter-spacing: .15px; }
.dlg-sep { height: 1px; width: 292px; margin: 6px 0 4.500px 2px; border: 0; background: #d9d9d9; }
.dlg-objects { padding-left: 11px; margin-bottom: 2px; }
.disclose { width: 0; height: 0; border-left: 7px solid #333; border-top: 5px solid transparent; border-bottom: 5px solid transparent; }
.objects { margin-left: 11px; letter-spacing: .45px; color: #555; }
.dlg-foot { height: 45px; border-top: 1px solid #d8d8d8; display: flex; align-items: center; padding-left: 9px; gap: 12px; }
.info { width: 16px; height: 16px; margin-right: 97px; }
.btn { width: 75px; height: 23px; background: #ebebeb; border: 1px solid #c4c4c4; text-align: center; line-height: 21px; font-size: 14px; color: #888; }

/* Nav bar */
.navbar { position: absolute; left: 1131px; top: 1120px; width: 296px; height: 30px; background: #f1f1f1; display: flex; align-items: center; }
.nav-ico { height: 24px; flex: none; }
.w28 { width: 28px; }
.w30 { width: 30px; }
.w32 { width: 32px; }
.w34 { width: 34px; }
.nav-caret { width: 10px; height: 5px; flex: none; }
.nav-caret::after { content: ""; display: block; margin: 0 auto; width: 0; border-left: 3.500px solid transparent; border-right: 3.500px solid transparent; border-top: 5px solid #444; }

/* Timeline */
.timeline { flex: none; height: 61px; background: #f3f3f3; display: flex; align-items: flex-start; }
.transport { width: 177px; display: flex; gap: 11.200px; padding: 19px 0 0 11px; flex: none; }
.t-btn { width: 20px; height: 24px; }
.history { position: relative; display: flex; height: 61px; padding: 15px 0 0 3px; background-image: repeating-linear-gradient(90deg, #cfcfcf 0 2px, transparent 2px 29.950px), linear-gradient(#cfcfcf, #cfcfcf); background-repeat: no-repeat; background-size: 573px 8px, 573px 2px; background-position: 15px 43px, 15px 50px; }
.h-item { width: 24px; height: 28px; margin-right: 6px; flex: none; }
.h-current { width: 34px; height: 30px; margin-left: -2px; background: #0e97dc; border-radius: 3px; flex: none; }
.marker { position: absolute; left: 599px; top: 13px; width: 3px; height: 40px; background: #555; }
.marker::before { content: ""; position: absolute; left: -6px; top: 0; width: 0; height: 0; border-left: 8px solid transparent; border-right: 8px solid transparent; border-top: 12px solid #555; }
.taskbar { flex: none; height: 2px; background: #2b3a48; }
```
